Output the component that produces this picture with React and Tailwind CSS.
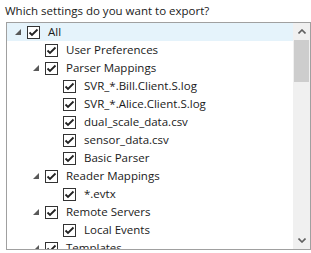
const rows = [
  { level: 0, label: 'All', expander: true, selected: true },
  { level: 1, label: 'User Preferences' },
  { level: 1, label: 'Parser Mappings', expander: true },
  { level: 2, label: 'SVR_*.Bill.Client.S.log' },
  { level: 2, label: 'SVR_*.Alice.Client.S.log' },
  { level: 2, label: 'dual_scale_data.csv' },
  { level: 2, label: 'sensor_data.csv' },
  { level: 2, label: 'Basic Parser' },
  { level: 1, label: 'Reader Mappings', expander: true },
  { level: 2, label: '*.evtx' },
  { level: 1, label: 'Remote Servers', expander: true },
  { level: 2, label: 'Local Events' },
  { level: 1, label: 'Templates', expander: true },
];

const indents = ['pl-[2px]', 'pl-[20px]', 'pl-[38px]'];

function Expander() {
  return (
    <svg width="6" height="6" viewBox="0 0 6 6" className="shrink-0">
      <path d="M6 0 L6 6 L0 6 Z" fill="#595959" />
    </svg>
  );
}

function CheckBox() {
  return (
    <span className="flex h-[13px] w-[13px] shrink-0 items-center justify-center border border-[#333333] bg-white">
      <svg width="11" height="11" viewBox="0 0 11 11">
        <path d="M1.5 5.5 L4 8 L9.5 2.5" fill="none" stroke="#222222" strokeWidth="1.8" />
      </svg>
    </span>
  );
}

function Row({ row }) {
  return (
    <div
      className={`flex h-[18px] items-center ${indents[row.level]} ${row.selected ? 'bg-[#e5f3fb]' : ''}`}
    >
      <span className="flex w-[18px] shrink-0 items-center justify-center">
        {row.expander && <Expander />}
      </span>
      <CheckBox />
      <span className="ml-[8px] whitespace-nowrap text-[11.5px] leading-none text-[#1a1a1a]">{row.label}</span>
    </div>
  );
}

export default function App() {
  return (
    <div className="h-[253px] w-[311px] bg-white font-['Open_Sans',sans-serif]">
      <p className="pl-[5px] pt-[3px] text-[11.5px] leading-[15px] text-[#1a1a1a]">Which settings do you want to export?</p>
      <div className="ml-[6px] mt-[4px] flex h-[228px] w-[305px] border border-[#a0a0a0]">
        <div className="flex-1 overflow-hidden">
          {rows.map((row) => (
            <Row key={row.label} row={row} />
          ))}
        </div>
        <div className="flex w-[17px] flex-col bg-[#f0f0f0]">
          <div className="flex h-[17px] items-center justify-center">
            <svg width="8" height="5" viewBox="0 0 8 5">
              <path d="M0.5 4.5 L4 1 L7.5 4.5" fill="none" stroke="#606060" strokeWidth="1.6" />
            </svg>
          </div>
          <div className="mx-[1px] h-[42px] bg-[#cdcdcd]" />
          <div className="flex-1" />
          <div className="flex h-[17px] items-center justify-center">
            <svg width="8" height="5" viewBox="0 0 8 5">
              <path d="M0.5 0.5 L4 4 L7.5 0.5" fill="none" stroke="#606060" strokeWidth="1.6" />
            </svg>
          </div>
        </div>
      </div>
    </div>
  );
}
